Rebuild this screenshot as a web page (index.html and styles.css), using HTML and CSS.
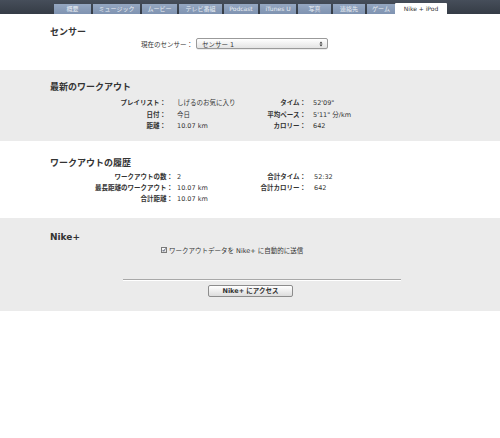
FILE: index.html
```html
<!DOCTYPE html>
<html lang="ja">
<head>
<meta charset="utf-8">
<title>Nike + iPod</title>
<link rel="stylesheet" href="styles.css">
</head>
<body>
<div class="topbar">
  <div class="tab w37">概要</div>
  <div class="tab w47">ミュージック</div>
  <div class="tab w35">ムービー</div>
  <div class="tab w43">テレビ番組</div>
  <div class="tab w34">Podcast</div>
  <div class="tab w36">iTunes U</div>
  <div class="tab w33">写真</div>
  <div class="tab w32">連絡先</div>
  <div class="tab w28 last">ゲーム</div>
  <div class="tab w52 active">Nike + iPod</div>
</div>

<section class="sec sec-sensor">
  <h2 class="title">センサー</h2>
  <div class="sensor-row">
    <span class="sensor-label">現在のセンサー：</span>
    <div class="select">
      <span>センサー 1</span>
      <svg class="arrows" width="4" height="6" viewBox="0 0 4 6"><path d="M0.5 2.5 L2 0.5 L3.5 2.5 Z M0.5 3.5 L2 5.5 L3.5 3.5 Z" fill="#333"/></svg>
    </div>
  </div>
</section>

<section class="sec grey sec-latest">
  <h2 class="title">最新のワークアウト</h2>
  <div class="grid grid-a">
    <div class="lbl">プレイリスト：</div><div class="val v1">しげるのお気に入り</div>
    <div class="lbl">タイム：</div><div class="val v2">52'09"</div>
    <div class="lbl">日付：</div><div class="val v1">今日</div>
    <div class="lbl">平均ペース：</div><div class="val v2">5'11" 分/km</div>
    <div class="lbl">距離：</div><div class="val v1">10.07 km</div>
    <div class="lbl">カロリー：</div><div class="val v2">642</div>
  </div>
</section>

<section class="sec sec-history">
  <h2 class="title">ワークアウトの履歴</h2>
  <div class="grid grid-b">
    <div class="lbl">ワークアウトの数：</div><div class="val v1">2</div>
    <div class="lbl">合計タイム：</div><div class="val v2">52:32</div>
    <div class="lbl">最長距離のワークアウト：</div><div class="val v1">10.07 km</div>
    <div class="lbl">合計カロリー：</div><div class="val v2">642</div>
    <div class="lbl">合計距離：</div><div class="val v1">10.07 km</div>
    <div class="lbl"></div><div class="val v2"></div>
  </div>
</section>

<section class="sec grey sec-nike">
  <h2 class="title">Nike+</h2>
  <div class="check-row">
    <span class="checkbox"><svg width="6" height="6" viewBox="0 0 6 6"><path d="M1 3 L2.5 4.8 L5.5 0.5" fill="none" stroke="#2a3a5a" stroke-width="1.1"/></svg></span>
    <span class="check-text">ワークアウトデータを Nike+ に自動的に送信</span>
  </div>
  <div class="rule"></div>
  <div class="btn-row">
    <div class="button">Nike+ にアクセス</div>
  </div>
</section>
</body>
</html>
```

FILE: styles.css
```css
* { box-sizing: border-box; }
html, body {
  margin: 0;
  padding: 0;
  background: #ffffff;
  font-family: "DejaVu Sans", "Noto Sans CJK JP", sans-serif;
  color: #333333;
}
.topbar {
  height: 14px;
  background: linear-gradient(#464e5a, #353c46);
  display: flex;
  align-items: flex-end;
  padding-left: 54px;
}
.tab {
  height: 10px;
  margin-right: 2px;
  background: linear-gradient(#95a7c1, #7f93b1);
  color: #e8edf3;
  font-size: 6px;
  line-height: 10px;
  text-align: center;
  white-space: nowrap;
  overflow: hidden;
}
.tab.last { margin-right: 0; }
.tab.active {
  background: #ffffff;
  color: #333333;
  height: 11px;
  line-height: 11px;
  border-radius: 1px 1px 0 0;
}
.w37 { width: 37px; }
.w47 { width: 47px; }
.w35 { width: 35px; }
.w43 { width: 43px; }
.w34 { width: 34px; }
.w36 { width: 36px; }
.w33 { width: 33px; }
.w32 { width: 32px; }
.w28 { width: 28px; }
.w52 { width: 52px; }

.sec { background: #ffffff; }
.sec.grey { background: #ebebeb; }
.title {
  margin: 0;
  padding-left: 50px;
  font-size: 9px;
  line-height: 12px;
  font-weight: bold;
  color: #333333;
}

.sec-sensor { height: 56px; padding-top: 12px; }
.sensor-row {
  display: flex;
  align-items: center;
  height: 11px;
}
.sensor-label {
  width: 193px;
  text-align: right;
  font-size: 6.5px;
}
.select {
  margin-left: 3px;
  width: 132px;
  height: 11px;
  border: 1px solid #9a9a9a;
  border-radius: 2px;
  background: linear-gradient(#ffffff, #e4e4e4);
  display: flex;
  align-items: center;
  justify-content: space-between;
  padding: 0 4px 0 5px;
  font-size: 6.5px;
  box-shadow: 0 0.5px 0.5px rgba(0,0,0,0.15);
}
.arrows { display: block; }

.grid {
  display: grid;
  font-size: 6.5px;
}
.lbl { text-align: right; font-weight: bold; white-space: nowrap; }
.val { white-space: nowrap; }

.sec-latest { height: 71px; padding-top: 11px; }
.grid-a {
  margin-top: 5px;
  grid-template-columns: 166px 76px 64px 1fr;
  grid-auto-rows: 11.5px;
  line-height: 11.5px;
}
.grid-a .v1 { padding-left: 11px; }
.grid-a .v2 { padding-left: 7px; }

.sec-history { height: 77px; padding-top: 16px; }
.grid-b {
  margin-top: 2.5px;
  grid-template-columns: 173px 73px 60px 1fr;
  grid-auto-rows: 11px;
  line-height: 11px;
}
.grid-b .v1 { padding-left: 4px; }
.grid-b .v2 { padding-left: 8px; }

.sec-nike { height: 93px; padding-top: 13px; }
.check-row {
  margin-top: 2px;
  height: 10px;
  display: flex;
  align-items: center;
  padding-left: 161px;
  font-size: 6.5px;
}
.checkbox {
  width: 6px;
  height: 6px;
  border: 0.5px solid #7a7a7a;
  background: linear-gradient(#ffffff, #d8d8d8);
  display: flex;
  align-items: center;
  justify-content: center;
  margin-right: 2px;
}
.checkbox svg { display: block; }
.rule {
  margin: 24px 0 0 123px;
  width: 278px;
  height: 2px;
  border-top: 1px solid #a8a8a8;
  border-bottom: 1px solid #ffffff;
}
.btn-row { margin-top: 4px; padding-left: 208px; }
.button {
  width: 85px;
  height: 12px;
  border: 1px solid #8c8c8c;
  border-radius: 2px;
  background: linear-gradient(#ffffff, #dcdcdc);
  font-size: 6.5px;
  line-height: 10px;
  text-align: center;
  font-weight: bold;
  color: #333333;
}
```
